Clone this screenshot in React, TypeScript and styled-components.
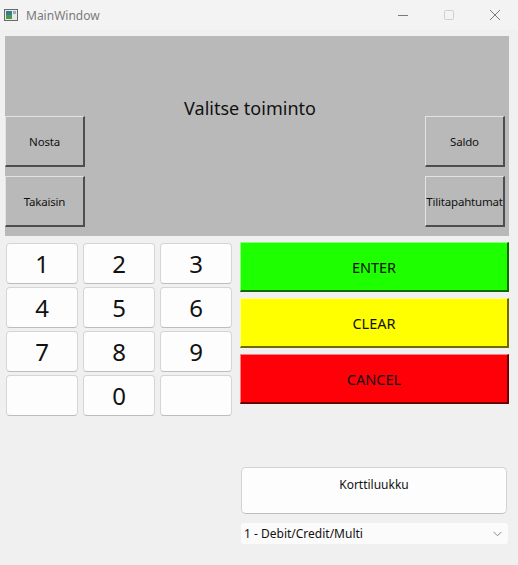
import React from "react";
import styled, { createGlobalStyle } from "styled-components";

const GlobalStyle = createGlobalStyle`
  html, body {
    margin: 0;
    padding: 0;
    background: #f0f0f0;
  }
  body {
    font-family: "Noto Sans", "Open Sans", sans-serif;
  }
`;

const Window = styled.div`
  width: 518px;
  height: 565px;
  display: flex;
  flex-direction: column;
  background: #f0f0f0;
  overflow: hidden;
`;

const TitleBar = styled.div`
  height: 30px;
  display: flex;
  align-items: center;
  background: #f3f3f3;
  padding-left: 4px;
  box-sizing: border-box;
`;

const TitleText = styled.span`
  margin-left: 8px;
  font-size: 12px;
  color: #7a7a7a;
`;

const Controls = styled.div`
  margin-left: auto;
  display: flex;
  height: 100%;
`;

const ControlButton = styled.div`
  width: 46px;
  height: 100%;
  display: flex;
  align-items: center;
  justify-content: center;
`;

const Content = styled.div`
  flex: 1;
  display: flex;
  flex-direction: column;
  padding: 6px 9px 0 5px;
`;

const Panel = styled.div`
  height: 200px;
  box-sizing: border-box;
  background: #b9b9b9;
  display: grid;
  grid-template-columns: 80px 1fr 80px;
  grid-template-rows: 71px 51px 51px;
  row-gap: 9px;
  padding: 0 4px 9px 0;
`;

const PanelTitle = styled.div`
  grid-column: 2;
  grid-row: 1 / 3;
  align-self: start;
  text-align: center;
  padding: 60px 10px 0 0;
  font-size: 18px;
  line-height: 24px;
  color: #111;
`;

const PanelButton = styled.button<{ $col: number; $row: number }>`
  grid-column: ${(p) => p.$col};
  grid-row: ${(p) => p.$row};
  margin: 0;
  padding: 0;
  background: #b9b9b9;
  border: none;
  border-top: 1px solid #e2e2e2;
  border-left: 1px solid #e2e2e2;
  border-right: 2px solid #4e4e4e;
  border-bottom: 2px solid #4e4e4e;
  font-family: "Noto Sans", sans-serif;
  font-size: 11.5px;
  color: #111;
  white-space: nowrap;
  letter-spacing: -0.2px;
`;

const Lower = styled.div`
  display: flex;
  gap: 8px;
  padding-left: 1px;
  flex: 1;
`;

const Keypad = styled.div`
  margin-top: 7px;
  display: grid;
  grid-template-columns: repeat(3, 72px);
  grid-auto-rows: 41px;
  column-gap: 5px;
  row-gap: 3px;
  align-self: start;
`;

const Key = styled.button`
  margin: 0;
  padding: 0;
  background: #fdfdfd;
  border: 1px solid #d5d5d5;
  border-bottom-color: #bdbdbd;
  border-radius: 4px;
  font-family: "Noto Sans", sans-serif;
  font-size: 24px;
  line-height: 1;
  color: #111;
`;

const RightColumn = styled.div`
  width: 269px;
  display: flex;
  flex-direction: column;
  padding-top: 6px;
`;

const ActionButton = styled.button<{ $bg: string; $dark: string; $light: string }>`
  height: 50px;
  margin: 0 0 6px 0;
  padding: 0;
  background: ${(p) => p.$bg};
  border: none;
  border-top: 1px solid ${(p) => p.$light};
  border-left: 1px solid ${(p) => p.$light};
  border-right: 2px solid ${(p) => p.$dark};
  border-bottom: 2px solid ${(p) => p.$dark};
  font-family: "Noto Sans", sans-serif;
  font-size: 14.5px;
  color: #111;
`;

const CardSlot = styled.button`
  margin: 57px 2px 0 1px;
  height: 47px;
  padding: 8px 0 0;
  display: flex;
  justify-content: center;
  align-items: flex-start;
  background: #fdfdfd;
  border: 1px solid #d3d3d3;
  border-bottom-color: #bdbdbd;
  border-radius: 5px;
  font-family: "Noto Sans", sans-serif;
  font-size: 12px;
  color: #111;
`;

const Combo = styled.div`
  margin: 9px 1px 0 1px;
  height: 21px;
  display: flex;
  align-items: center;
  padding: 0 6px 0 3px;
  background: #fbfbfb;
  border-radius: 3px;
  font-size: 12px;
  color: #111;
`;

const ComboText = styled.span`
  flex: 1;
`;

const AppIcon = () => (
  <svg width="14" height="12" viewBox="0 0 14 12">
    <rect x="0.5" y="0.5" width="13" height="11" fill="#e8e8e8" stroke="#6a6a6a" />
    <rect x="2" y="2" width="6" height="8" fill="#3b7a8f" />
    <rect x="2" y="6" width="6" height="4" fill="#4a9a4a" />
    <rect x="9" y="2" width="3" height="3" fill="#9ab" />
  </svg>
);

const keys = ["1", "2", "3", "4", "5", "6", "7", "8", "9", "", "0", ""];

export default function App() {
  return (
    <>
      <GlobalStyle />
      <Window>
        <TitleBar>
          <AppIcon />
          <TitleText>MainWindow</TitleText>
          <Controls>
            <ControlButton>
              <svg width="10" height="10" viewBox="0 0 10 10">
                <line x1="0" y1="5.5" x2="10" y2="5.5" stroke="#7a7a7a" strokeWidth="1" />
              </svg>
            </ControlButton>
            <ControlButton>
              <svg width="10" height="10" viewBox="0 0 10 10">
                <rect x="0.5" y="0.5" width="9" height="9" rx="1" fill="none" stroke="#d0d0d0" />
              </svg>
            </ControlButton>
            <ControlButton>
              <svg width="10" height="10" viewBox="0 0 10 10">
                <path d="M0 0 L10 10 M10 0 L0 10" stroke="#7a7a7a" strokeWidth="1" />
              </svg>
            </ControlButton>
          </Controls>
        </TitleBar>
        <Content>
          <Panel>
            <PanelTitle>Valitse toiminto</PanelTitle>
            <PanelButton $col={1} $row={2}>Nosta</PanelButton>
            <PanelButton $col={1} $row={3}>Takaisin</PanelButton>
            <PanelButton $col={3} $row={2}>Saldo</PanelButton>
            <PanelButton $col={3} $row={3}>Tilitapahtumat</PanelButton>
          </Panel>
          <Lower>
            <Keypad>
              {keys.map((k, i) => (
                <Key key={i}>{k}</Key>
              ))}
            </Keypad>
            <RightColumn>
              <ActionButton $bg="#1eff00" $light="#8fff80" $dark="#0f6a00">ENTER</ActionButton>
              <ActionButton $bg="#ffff00" $light="#ffff90" $dark="#6e6a00">CLEAR</ActionButton>
              <ActionButton $bg="#ff0009" $light="#ff8080" $dark="#6a0000">CANCEL</ActionButton>
              <CardSlot>Korttiluukku</CardSlot>
              <Combo>
                <ComboText>1 - Debit/Credit/Multi</ComboText>
                <svg width="9" height="6" viewBox="0 0 9 6">
                  <path d="M0.5 0.8 L4.5 4.8 L8.5 0.8" fill="none" stroke="#8a8a8a" strokeWidth="1" />
                </svg>
              </Combo>
            </RightColumn>
          </Lower>
        </Content>
      </Window>
    </>
  );
}
